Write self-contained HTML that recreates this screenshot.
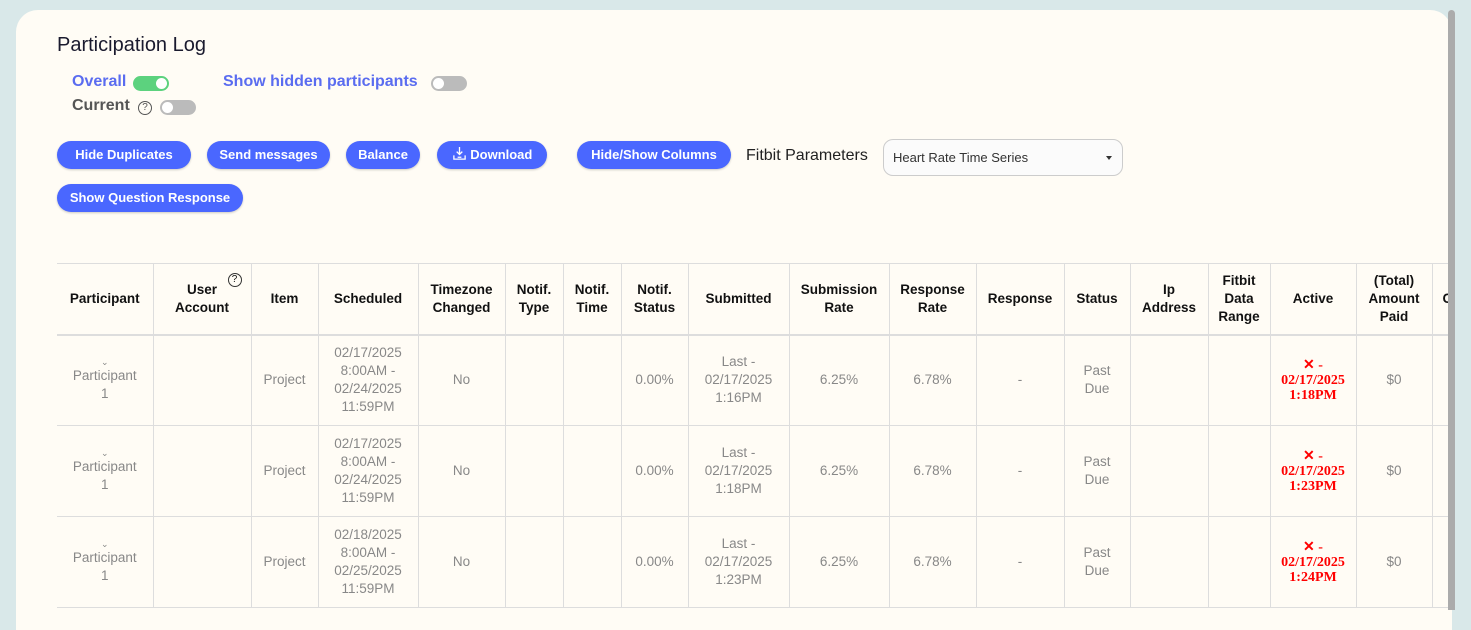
<!DOCTYPE html>
<html><head><meta charset="utf-8"><style>
*{box-sizing:border-box;margin:0;padding:0}
body{width:1471px;height:607px;overflow:hidden;background:#d9e8e9;font-family:"Liberation Sans",sans-serif;position:relative}
.card{position:absolute;left:16px;top:10px;width:1436px;height:620px;background:#fffcf5;border-radius:22px 22px 0 0;overflow:hidden}
.sb{position:absolute;left:1448px;top:10px;width:7px;height:600px;background:#ababab;border-radius:4px 4px 0 0}
.abs{position:absolute}
h1{position:absolute;left:41px;top:24px;font-size:20px;font-weight:normal;color:#1a1a2e}
.lbl{font-size:16px;font-weight:bold}
.tg{position:absolute;width:36px;height:15px;border-radius:8px;background:#bbb}
.tg::after{content:"";position:absolute;top:2px;left:2px;width:11px;height:11px;border-radius:50%;background:#fff}
.tg.on{background:#5cd27e}.tg.on::after{left:23px}
.btn{position:absolute;height:28px;border-radius:14px;background:#4a67ff;color:#fff;font-size:13px;font-weight:bold;line-height:28px;text-align:center;box-shadow:0 1px 2px rgba(0,0,0,.2)}
.sel{position:absolute;left:867px;top:129px;width:240px;height:37px;border:1px solid #ccc;border-radius:10px;background:#fbfbfb;font-size:13px;color:#333;line-height:35px;padding-left:9px}
.sel::after{content:"";position:absolute;right:10px;top:16px;border:3.5px solid transparent;border-top:4px solid #333}
table{position:absolute;left:41px;top:253px;width:1375px;border-collapse:collapse;table-layout:fixed}
td,th{border-left:1px solid #ddd;border-right:1px solid #ddd;text-align:center;font-size:13.5px;line-height:18px;overflow:hidden}
th{height:71px;color:#111;font-weight:bold;border-top:1px solid #ddd;border-bottom:2px solid #ddd}
td{height:91px;color:#888;border-bottom:1px solid #ddd}
tr>*:first-child{border-left:none}
.act{color:#f00;font-family:"Liberation Serif",serif;font-weight:bold;font-size:14px;line-height:15px}
.q{display:inline-block;width:14px;height:14px;border:1.3px solid #333;border-radius:50%;font-size:10px;line-height:11px;text-align:center;font-weight:normal}
.chev{font-size:9px;line-height:10px;color:#888}
</style></head><body>
<div class="card">
<h1>Participation Log</h1>
<div class="abs lbl" style="left:56px;top:63px;color:#5a6cf0">Overall</div>
<div class="tg on" style="left:117px;top:66px"></div>
<div class="abs lbl" style="left:207px;top:63px;color:#5a6cf0">Show hidden participants</div>
<div class="tg" style="left:415px;top:66px"></div>
<div class="abs lbl" style="left:56px;top:87px;color:#555">Current</div>
<div class="abs" style="left:122px;top:87px"><span class="q" style="border-color:#555;color:#555">?</span></div>
<div class="tg" style="left:144px;top:90px"></div>
<div class="btn" style="left:41px;top:131px;width:134px">Hide Duplicates</div>
<div class="btn" style="left:191px;top:131px;width:123px">Send messages</div>
<div class="btn" style="left:330px;top:131px;width:74px">Balance</div>
<div class="btn" style="left:421px;top:131px;width:110px"><svg width="15" height="15" viewBox="0 0 16 16" style="vertical-align:-2px" fill="none" stroke="#fff" stroke-width="1.4"><path d="M8 1v8M5 6l3 3 3-3M2 10v4h12v-4M6 12h4"/></svg> Download</div>
<div class="btn" style="left:561px;top:131px;width:154px">Hide/Show Columns</div>
<div class="abs" style="left:730px;top:137px;font-size:16px;color:#222">Fitbit Parameters</div>
<div class="sel">Heart Rate Time Series</div>
<div class="btn" style="left:41px;top:174px;width:186px">Show Question Response</div>
<table>
<colgroup><col style="width:96px"><col style="width:98px"><col style="width:67px"><col style="width:100px"><col style="width:87px"><col style="width:58px"><col style="width:58px"><col style="width:67px"><col style="width:101px"><col style="width:100px"><col style="width:87px"><col style="width:88px"><col style="width:66px"><col style="width:78px"><col style="width:62px"><col style="width:86px"><col style="width:76px"><col style="width:100px"></colgroup>
<tr><th>Participant</th><th><div style="position:relative">User<br>Account<span class="q" style="position:absolute;right:9px;top:-8px">?</span></div></th><th>Item</th><th>Scheduled</th><th>Timezone<br>Changed</th><th>Notif.<br>Type</th><th>Notif.<br>Time</th><th>Notif.<br>Status</th><th>Submitted</th><th>Submission<br>Rate</th><th>Response<br>Rate</th><th>Response</th><th>Status</th><th>Ip<br>Address</th><th>Fitbit<br>Data<br>Range</th><th>Active</th><th>(Total)<br>Amount<br>Paid</th><th style="text-align:left;padding-left:10px">C</th></tr>
<tr><td><div class="chev">&#8964;</div>Participant<br>1</td><td></td><td>Project</td><td>02/17/2025<br>8:00AM -<br>02/24/2025<br>11:59PM</td><td>No</td><td></td><td></td><td>0.00%</td><td>Last -<br>02/17/2025<br>1:16PM</td><td>6.25%</td><td>6.78%</td><td>-</td><td>Past<br>Due</td><td></td><td></td><td class="act">✕ -<br>02/17/2025<br>1:18PM</td><td>$0</td><td></td></tr>
<tr><td><div class="chev">&#8964;</div>Participant<br>1</td><td></td><td>Project</td><td>02/17/2025<br>8:00AM -<br>02/24/2025<br>11:59PM</td><td>No</td><td></td><td></td><td>0.00%</td><td>Last -<br>02/17/2025<br>1:18PM</td><td>6.25%</td><td>6.78%</td><td>-</td><td>Past<br>Due</td><td></td><td></td><td class="act">✕ -<br>02/17/2025<br>1:23PM</td><td>$0</td><td></td></tr>
<tr><td><div class="chev">&#8964;</div>Participant<br>1</td><td></td><td>Project</td><td>02/18/2025<br>8:00AM -<br>02/25/2025<br>11:59PM</td><td>No</td><td></td><td></td><td>0.00%</td><td>Last -<br>02/17/2025<br>1:23PM</td><td>6.25%</td><td>6.78%</td><td>-</td><td>Past<br>Due</td><td></td><td></td><td class="act">✕ -<br>02/17/2025<br>1:24PM</td><td>$0</td><td></td></tr>
</table>
</div>
<div class="sb"></div>
</body></html>
